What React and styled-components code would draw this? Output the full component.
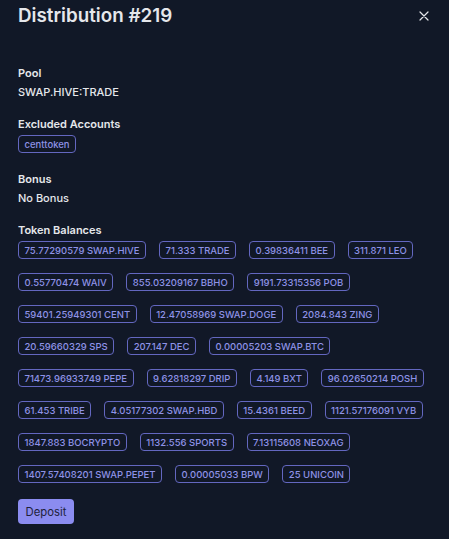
import styled, { createGlobalStyle } from "styled-components";

const GlobalStyle = createGlobalStyle`
  html, body {
    margin: 0;
    padding: 0;
    background: #111827;
  }
  body {
    font-family: Inter, "Noto Sans", sans-serif;
    color: #e5e7eb;
  }
`;

const Panel = styled.div`
  width: 449px;
  min-height: 539px;
  box-sizing: border-box;
  background: #111827;
  padding: 2px 18px 14px 18px;
  display: flex;
  flex-direction: column;
`;

const Header = styled.div`
  display: flex;
  justify-content: space-between;
  align-items: center;
  height: 28px;
  margin-bottom: 35px;
`;

const Title = styled.h2`
  margin: 0;
  font-size: 18.8px;
  line-height: 28px;
  font-weight: 600;
  color: #e5e7eb;
`;

const CloseButton = styled.button`
  background: none;
  border: 0;
  padding: 0;
  margin-right: 2px;
  width: 10px;
  height: 10px;
  display: flex;
  align-items: center;
  justify-content: center;
  cursor: pointer;
`;

const Section = styled.div`
  display: flex;
  flex-direction: column;
  margin-bottom: ${(p) => p.$after || 16}px;
`;

const Label = styled.div`
  font-size: 11px;
  font-weight: 600;
  line-height: 16px;
  color: #e5e7eb;
  margin-bottom: 3px;
`;

const Value = styled.div`
  font-size: 11px;
  font-weight: 500;
  line-height: 16px;
  color: #e5e7eb;
`;

const Badges = styled.div`
  display: flex;
  flex-wrap: wrap;
  column-gap: 13px;
  row-gap: 14px;
`;

const Badge = styled.span`
  display: inline-flex;
  align-items: center;
  height: 18px;
  box-sizing: border-box;
  padding: 0 5.5px;
  border: 1px solid #6367c0;
  border-radius: 4px;
  font-size: 9.5px;
  font-weight: 500;
  color: #8e92e6;
  white-space: nowrap;
`;

const DepositButton = styled.button`
  align-self: flex-start;
  height: 25px;
  padding: 0 7.5px;
  border: 0;
  border-radius: 4px;
  background: #8b8cf0;
  color: #1e1f3b;
  font-family: Inter, "Noto Sans", sans-serif;
  font-size: 11.3px;
  font-weight: 400;
  cursor: pointer;
`;

const balances = [
  "75.77290579 SWAP.HIVE",
  "71.333 TRADE",
  "0.39836411 BEE",
  "311.871 LEO",
  "0.55770474 WAIV",
  "855.03209167 BBHO",
  "9191.73315356 POB",
  "59401.25949301 CENT",
  "12.47058969 SWAP.DOGE",
  "2084.843 ZING",
  "20.59660329 SPS",
  "207.147 DEC",
  "0.00005203 SWAP.BTC",
  "71473.96933749 PEPE",
  "9.62818297 DRIP",
  "4.149 BXT",
  "96.02650214 POSH",
  "61.453 TRIBE",
  "4.05177302 SWAP.HBD",
  "15.4361 BEED",
  "1121.57176091 VYB",
  "1847.883 BOCRYPTO",
  "1132.556 SPORTS",
  "7.13115608 NEOXAG",
  "1407.57408201 SWAP.PEPET",
  "0.00005033 BPW",
  "25 UNICOIN",
];

const App = () => {
  return (
    <>
      <GlobalStyle />
      <Panel>
        <Header>
          <Title>Distribution #219</Title>
          <CloseButton aria-label="Close">
            <svg width="10" height="10" viewBox="0 0 10 10">
              <path d="M1 1L9 9M9 1L1 9" stroke="#e5e7eb" strokeWidth="1.2" strokeLinecap="round" />
            </svg>
          </CloseButton>
        </Header>

        <Section>
          <Label>Pool</Label>
          <Value>SWAP.HIVE:TRADE</Value>
        </Section>

        <Section $after={18}>
          <Label>Excluded Accounts</Label>
          <Badges>
            <Badge>centtoken</Badge>
          </Badges>
        </Section>

        <Section>
          <Label>Bonus</Label>
          <Value>No Bonus</Value>
        </Section>

        <Section>
          <Label>Token Balances</Label>
          <Badges>
            {balances.map((b) => (
              <Badge key={b}>{b}</Badge>
            ))}
          </Badges>
        </Section>

        <DepositButton>Deposit</DepositButton>
      </Panel>
    </>
  );
};

export default App;
